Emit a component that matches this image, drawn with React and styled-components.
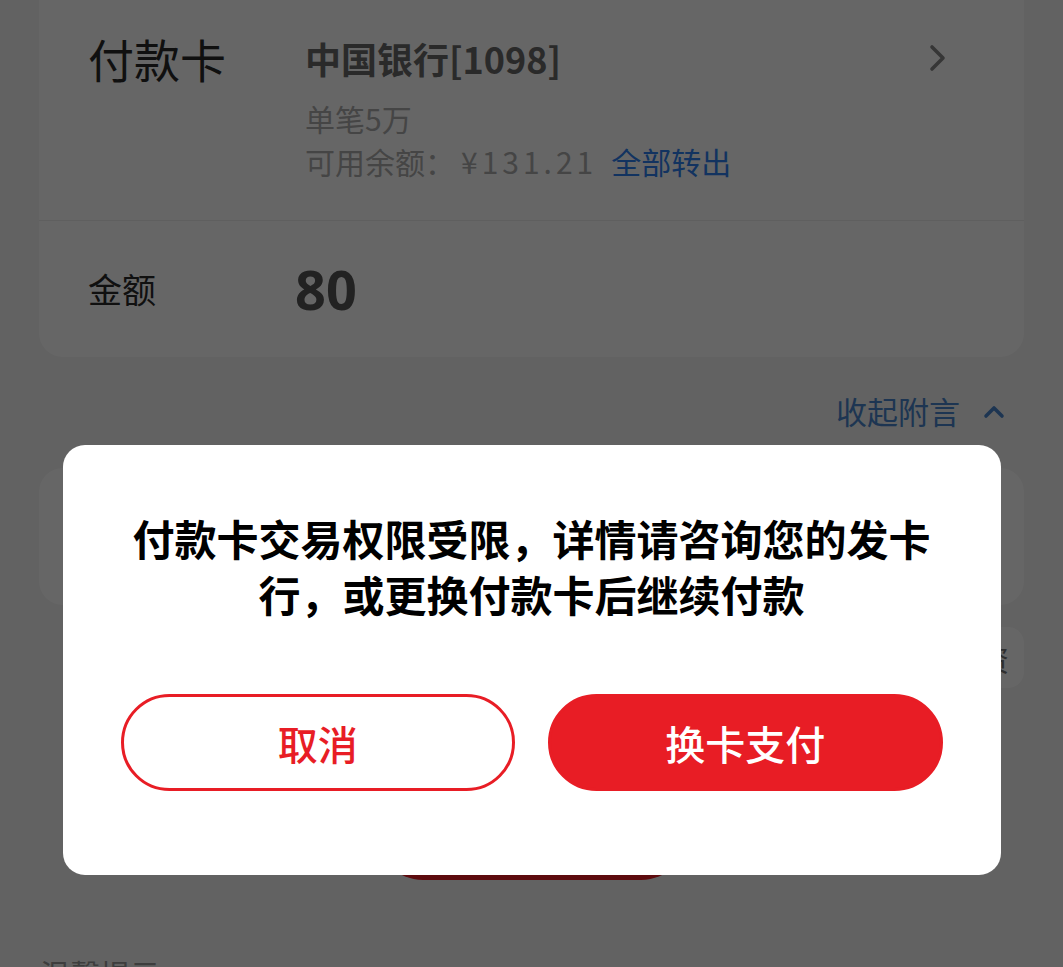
import React from 'react';
import styled, { createGlobalStyle } from 'styled-components';

const GlobalStyle = createGlobalStyle`
  html, body {
    margin: 0;
    padding: 0;
    background: #f5f5f5;
    overflow: hidden;
  }
  body {
    font-family: "Noto Sans CJK SC", "Noto Sans", sans-serif;
  }
`;

const Page = styled.div`
  height: 967px;
  padding: 0 39px;
  box-sizing: border-box;
  overflow: hidden;
`;

const Card = styled.div`
  background: #fff;
  border-radius: 24px;
  margin-top: ${p => p.$offset || 0}px;
`;

const CardTop = styled.div`
  display: flex;
  align-items: flex-start;
  padding: 70px 77px 37px 49px;
  border-bottom: 1px solid #eeeeee;
`;

const Label = styled.div`
  width: ${p => p.$width}px;
  flex-shrink: 0;
  font-size: ${p => p.$size}px;
  line-height: 56px;
  color: #2a2a2a;
`;

const Info = styled.div`
  flex: 1;
  display: flex;
  flex-direction: column;
`;

const BankName = styled.div`
  font-size: 36px;
  line-height: 56px;
  font-weight: 700;
  color: #6a6a6a;
`;

const SubLine = styled.div`
  font-size: 30px;
  line-height: 43px;
  color: #adadad;
  margin-top: ${p => p.$first ? 11 : 0}px;
  display: flex;
  align-items: center;
`;

const Money = styled.span`
  letter-spacing: 4px;
  margin-left: 6px;
`;

const Link = styled.span`
  color: #2f7ff0;
  margin-left: 14px;
`;

const Arrow = styled.svg`
  margin-top: 14px;
  flex-shrink: 0;
`;

const AmountRow = styled.div`
  display: flex;
  align-items: center;
  height: 136px;
  padding-left: 49px;
`;

const AmountValue = styled.div`
  font-size: 54px;
  font-weight: 700;
  color: #555;
  font-family: "Noto Sans", "Noto Sans CJK SC", sans-serif;
`;

const Toggle = styled.div`
  margin-top: 33px;
  display: flex;
  justify-content: flex-end;
  align-items: center;
  padding-right: 19px;
  font-size: 31px;
  line-height: 42px;
  color: #4a86cc;
`;

const Caret = styled.svg`
  margin-left: 23px;
`;

const MemoCard = styled(Card)`
  height: 137px;
`;

const Chips = styled.div`
  margin-top: 22px;
  display: flex;
  justify-content: flex-end;
  gap: 16px;
`;

const Chip = styled.div`
  height: 61px;
  padding: 0 15px;
  display: flex;
  align-items: center;
  background: #fff;
  border-radius: 16px;
  font-size: 30px;
  color: #777;
`;

const SubmitButton = styled.button`
  display: block;
  margin: 96px auto 0;
  width: 314px;
  height: 96px;
  border: none;
  border-radius: 48px;
  background: #e81d25;
  color: #fff;
  font-family: inherit;
  font-size: 36px;
`;

const Tips = styled.div`
  margin-top: 72px;
  padding-left: 1px;
  font-size: 30px;
  line-height: 42px;
  color: #999;
`;

const Mask = styled.div`
  position: fixed;
  inset: 0;
  background: rgba(0, 0, 0, 0.6);
  display: flex;
  justify-content: center;
  align-items: flex-start;
  padding-top: 445px;
  box-sizing: border-box;
`;

const Dialog = styled.div`
  width: 938px;
  box-sizing: border-box;
  background: #fff;
  border-radius: 22px;
  padding: 65px 58px 84px;
`;

const Message = styled.div`
  font-size: 42px;
  line-height: 56px;
  font-weight: 700;
  color: #000;
  text-align: center;
`;

const Actions = styled.div`
  margin-top: 72px;
  display: grid;
  grid-template-columns: 1fr 1fr;
  gap: 33px;
`;

const ActionButton = styled.button`
  height: 97px;
  box-sizing: border-box;
  border-radius: 49px;
  border: 3px solid #e81d25;
  background: ${p => p.$primary ? '#e81d25' : '#fff'};
  color: ${p => p.$primary ? '#fff' : '#e81d25'};
  font-family: inherit;
  font-size: 40px;
  font-weight: 500;
  cursor: pointer;
`;

const App = () =>
  <>
    <GlobalStyle />
    <Page>
      <Card $offset={-40}>
        <CardTop>
          <Label $width={217} $size={46}>付款卡</Label>
          <Info>
            <BankName>中国银行[1098]</BankName>
            <SubLine $first>单笔5万</SubLine>
            <SubLine>
              可用余额：<Money>¥131.21</Money>
              <Link>全部转出</Link>
            </SubLine>
          </Info>
          <Arrow width="18" height="28" viewBox="0 0 18 28">
            <polyline points="3,3 14,14 3,25" fill="none" stroke="#888" strokeWidth="3.6" strokeLinecap="round" strokeLinejoin="round" />
          </Arrow>
        </CardTop>
        <AmountRow>
          <Label $width={207} $size={34}>金额</Label>
          <AmountValue>80</AmountValue>
        </AmountRow>
      </Card>

      <Toggle>
        收起附言
        <Caret width="22" height="15" viewBox="0 0 22 15">
          <polyline points="3,12 11,4 19,12" fill="none" stroke="#4a86cc" strokeWidth="3.6" strokeLinecap="round" strokeLinejoin="round" />
        </Caret>
      </Toggle>

      <MemoCard $offset={36} />

      <Chips>
        <Chip>生活费</Chip>
        <Chip>还款</Chip>
        <Chip>房租</Chip>
        <Chip>工资</Chip>
      </Chips>

      <SubmitButton>下一步</SubmitButton>

      <Tips>温馨提示</Tips>
    </Page>

    <Mask>
      <Dialog>
        <Message>付款卡交易权限受限，详情请咨询您的发卡行，或更换付款卡后继续付款</Message>
        <Actions>
          <ActionButton>取消</ActionButton>
          <ActionButton $primary>换卡支付</ActionButton>
        </Actions>
      </Dialog>
    </Mask>
  </>;

export default App;
